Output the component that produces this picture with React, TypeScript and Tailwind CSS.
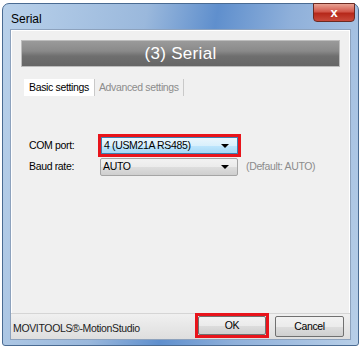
export default function App() {
  return (
    <div className="w-[363px] h-[350px] bg-white pl-[2px] pr-[4px] pt-[3px] pb-[4px] font-['Liberation_Sans',sans-serif] text-[10.5px] tracking-[-0.35px] text-black">
      <div className="h-full flex flex-col rounded-t-[7px] rounded-b-[3px] border border-[#4a6b92] bg-[linear-gradient(100deg,#b9d1ea_0%,#9ab8dc_35%,#5f8fcd_52%,#8fb0da_70%,#b8cfe8_100%)]">
        {/* title bar */}
        <div className="h-[25px] flex items-start relative">
          <span className="ml-[8px] mt-[6px] text-[12px] tracking-normal text-black">Serial</span>
          <div className="absolute right-[3px] -top-[1px] w-[42px] h-[19px] rounded-b-[4px] border border-[#6b2a22] bg-[linear-gradient(#e8a394_0%,#d2574a_45%,#b6281a_55%,#c9493a_100%)] flex items-center justify-center">
            <span className="text-white font-bold text-[13px] leading-none">x</span>
          </div>
        </div>
        {/* client */}
        <div className="mx-[7px] mb-[5px] flex-1 flex flex-col border border-[#8da2bd] bg-[#f0f0f0] shadow-[inset_0_0_0_1px_#fff]">
          <div className="mx-[10px] mt-[10px] h-[27px] flex items-center justify-center bg-[linear-gradient(#9a9a9a_0%,#8a8a8a_40%,#6f6f6f_60%,#666_100%)] border border-[#bdbdbd]">
            <span className="text-[17px] text-white tracking-[0.3px]">(3) Serial</span>
          </div>
          {/* tabs */}
          <div className="mx-[13px] mt-[12px] flex items-stretch h-[17px]">
            <div className="px-[5px] bg-white flex items-center text-black">Basic settings</div>
            <div className="w-px bg-[#c9c9c9]" />
            <div className="px-[4px] flex items-center text-[#8c8c8c]">Advanced settings</div>
            <div className="w-px bg-[#c9c9c9]" />
          </div>
          {/* form */}
          <div className="mt-[38px] ml-[18px] flex flex-col gap-[1px]">
            <div className="flex items-center h-[23px]">
              <span className="w-[69px]">COM port:</span>
              <div className="w-[143px] h-[23px] border-[3px] border-[#e8141b] flex">
                <div className="flex-1 flex items-center justify-between pl-[2px] pr-[8px] border border-[#3c7fb1] bg-[linear-gradient(#eaf6fd_0%,#d9f0fc_50%,#bee6fd_51%,#a7d9f5_100%)]">
                  <span>4 (USM21A RS485)</span>
                  <span className="w-0 h-0 border-l-[4px] border-r-[4px] border-t-[4px] border-l-transparent border-r-transparent border-t-black" />
                </div>
              </div>
            </div>
            <div className="flex items-center h-[18px]">
              <span className="w-[71px]">Baud rate:</span>
              <div className="w-[138px] h-[18px] flex items-center justify-between pl-[2px] pr-[8px] border border-[#a5a5a5] rounded-[2px] bg-[linear-gradient(#f2f2f2_0%,#ebebeb_50%,#dddddd_51%,#cfcfcf_100%)]">
                <span>AUTO</span>
                <span className="w-0 h-0 border-l-[4px] border-r-[4px] border-t-[4px] border-l-transparent border-r-transparent border-t-black" />
              </div>
              <span className="ml-[8px] text-[#8c8c8c]">(Default: AUTO)</span>
            </div>
          </div>
          <div className="flex-1" />
          {/* bottom bar */}
          <div className="h-[26px] flex items-end bg-[linear-gradient(#f0f0f0_0%,#dedede_100%)] border-t border-[#d5d5d5]">
            <span className="ml-[2px] mb-[2px] text-[#222]">MOVITOOLS®-MotionStudio</span>
            <div className="ml-auto mb-[1px] w-[74px] h-[25px] border-[3px] border-[#e8141b] flex">
              <div className="flex-1 flex items-center justify-center border border-[#707070] rounded-[2px] bg-[linear-gradient(#f2f2f2_0%,#ebebeb_50%,#dddddd_51%,#cfcfcf_100%)]">OK</div>
            </div>
            <div className="ml-[6px] mr-[6px] mb-[2px] w-[69px] h-[21px] flex items-center justify-center border border-[#707070] rounded-[2px] bg-[linear-gradient(#f2f2f2_0%,#ebebeb_50%,#dddddd_51%,#cfcfcf_100%)]">Cancel</div>
          </div>
        </div>
      </div>
    </div>
  );
}
